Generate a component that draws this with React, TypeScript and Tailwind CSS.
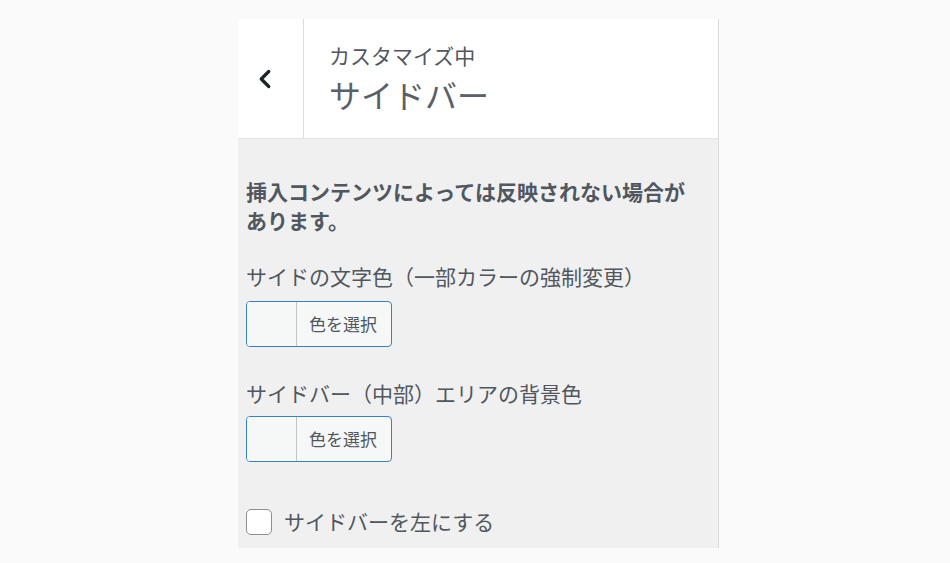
import { ChevronLeft } from "lucide-react";

const font = { fontFamily: '"Noto Sans CJK JP", "Noto Sans", sans-serif' };

function ColorButton() {
  return (
    <button
      type="button"
      className="flex h-[46px] w-[146px] items-stretch overflow-hidden rounded-[4px] border border-[#3582c4] bg-[#f6f7f7] p-0"
    >
      <span className="w-[50px] shrink-0 border-r border-[#c3c4c7] bg-[#f6f7f7]" />
      <span className="flex flex-1 items-center pl-[12px] text-[17px] text-[#50575e]">
        色を選択
      </span>
    </button>
  );
}

export default function App() {
  return (
    <div className="min-h-[563px] w-[950px] bg-[#fafafa] pt-[19px]" style={font}>
      <div className="ml-[238px] flex h-[529px] w-[481px] flex-col border-r border-[#dcdcde]">
        <div className="flex h-[120px] shrink-0 border-b border-[#e4e4e6] bg-white">
          <div className="flex w-[66px] items-center justify-center border-r border-[#dcdcde] pr-[12px]">
            <ChevronLeft size={30} strokeWidth={2.6} className="text-[#1d2327]" />
          </div>
          <div className="flex flex-col pl-[25px] pt-[22px] text-[#50575e]">
            <span className="text-[21px] leading-[29px]">カスタマイズ中</span>
            <span className="mt-[3px] text-[32px] leading-[42px] text-[#5a6067]">サイドバー</span>
          </div>
        </div>

        <div className="flex flex-1 flex-col bg-[#f0f0f1] pl-[8px] pt-[38px]">
          <p className="text-[21px] font-bold leading-[29px] text-[#50575e]">
            挿入コンテンツによっては反映されない場合が
            <br />
            あります。
          </p>

          <label className="mt-[27px] text-[21px] leading-[29px] text-[#50575e]">
            サイドの文字色（一部カラーの強制変更）
          </label>
          <div className="mt-[10px]">
            <ColorButton />
          </div>

          <label className="mt-[32px] text-[21px] leading-[29px] text-[#50575e]">
            サイドバー（中部）エリアの背景色
          </label>
          <div className="mt-[8px]">
            <ColorButton />
          </div>

          <div className="mt-[45px] flex items-center gap-[12px]">
            <span className="h-[26px] w-[26px] rounded-[5px] border-[1.5px] border-[#8c8f94] bg-white" />
            <span className="text-[21px] leading-[29px] text-[#50575e]">
              サイドバーを左にする
            </span>
          </div>
        </div>
      </div>
    </div>
  );
}
